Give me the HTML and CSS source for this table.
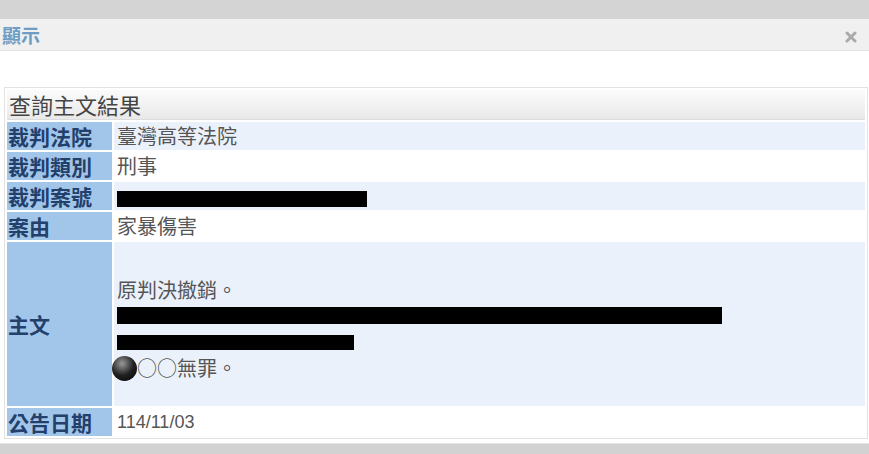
FILE: index.html
```html
<!DOCTYPE html>
<html lang="zh-Hant">
<head>
<meta charset="utf-8">
<link rel="stylesheet" href="styles.css">
</head>
<body>
<div class="topbar"></div>
<div class="titlebar">
  <span class="title">顯示</span>
  <svg class="close" width="12" height="12" viewBox="0 0 12 12"><path d="M2 2 L10 10 M10 2 L2 10" stroke="#aaa" stroke-width="3" stroke-linecap="round"/></svg>
</div>
<div class="content">
  <table class="result">
    <tr><th class="head" colspan="2">查詢主文結果</th></tr>
    <tr class="alt"><td class="label">裁判法院</td><td class="value">臺灣高等法院</td></tr>
    <tr><td class="label">裁判類別</td><td class="value">刑事</td></tr>
    <tr class="alt"><td class="label">裁判案號</td><td class="value"><span class="redact r-case"></span></td></tr>
    <tr><td class="label">案由</td><td class="value">家暴傷害</td></tr>
    <tr class="alt main"><td class="label">主文</td><td class="value">
      <div class="line">原判決撤銷。</div>
      <div class="line l2"><span class="redact r-long"></span></div>
      <div class="line l3"><span class="redact r-short"></span></div>
      <div class="line"><span class="ball"></span>○○無罪。</div>
    </td></tr>
    <tr><td class="label">公告日期</td><td class="value date">114/11/03</td></tr>
  </table>
</div>
<div class="bottombar"></div>
</body>
</html>
```
FILE: styles.css
```css
html, body {
  margin: 0;
  padding: 0;
  background: #fff;
  font-family: "Noto Sans CJK TC", "Noto Sans", sans-serif;
  overflow: hidden;
}
.topbar {
  height: 19px;
  background: #d4d4d4;
}
.titlebar {
  height: 31px;
  background: #f0f0f0;
  border-bottom: 1px solid #e2e2e2;
  display: flex;
  align-items: center;
  justify-content: space-between;
  padding: 0 12px 0 2px;
}
.title {
  color: #6d9dc5;
  font-weight: bold;
  font-size: 19px;
}
.close {
  margin-top: 4px;
}
.content {
  height: 392px;
  padding: 38px 2px 0 6px;
  box-sizing: border-box;
}
.result {
  border-collapse: separate;
  border-spacing: 2px;
  border: 1px solid #e2e2e2;
  background: #fff;
  margin: 0;
  position: relative;
  top: -2px;
  left: -2px;
  width: 864px;
}
.head {
  text-align: left;
  height: 29px;
  padding: 0 0 0 2px;
  font-size: 22px;
  font-weight: normal;
  color: #444;
  background: linear-gradient(#fbfbfb, #e9e9e9);
  border-bottom: 1px solid #dcdcdc;
  line-height: 29px;
}
.result td {
  padding: 0;
  height: 28px;
  font-size: 20px;
  line-height: 28px;
}
.label {
  width: 104px;
  background: #a2c6ea;
  color: #22406b;
  font-weight: bold;
  padding-left: 1px !important;
  white-space: nowrap;
  font-size: 21px !important;
}
.value {
  color: #555;
  padding-left: 3px !important;
  background: #fff;
}
.alt .value {
  background: #ebf1fb;
}
.main td {
  height: 164px;
}
.main .value {
  height: 154px;
  padding-top: 10px !important;
}
.line {
  height: 24px;
  display: flex;
  align-items: center;
}
.l2 { height: 26px; }
.l3 { height: 28px; }
.redact {
  display: inline-block;
  background: #000;
}
.r-case {
  width: 250px;
  height: 16px;
  vertical-align: middle;
}
.r-long {
  width: 605px;
  height: 17px;
}
.r-short {
  width: 237px;
  height: 15px;
}
.ball {
  display: inline-block;
  width: 25px;
  height: 25px;
  border-radius: 50%;
  margin-left: -5px;
  background: radial-gradient(circle at 40% 30%, #999 0%, #222 50%, #000 100%);
}
.date {
  font-family: "Liberation Sans", Arial, sans-serif;
  font-size: 18px !important;
}
.bottombar {
  height: 10px;
  background: #d2d2d2;
  border-top: 1px solid #e6e6e6;
}
```
